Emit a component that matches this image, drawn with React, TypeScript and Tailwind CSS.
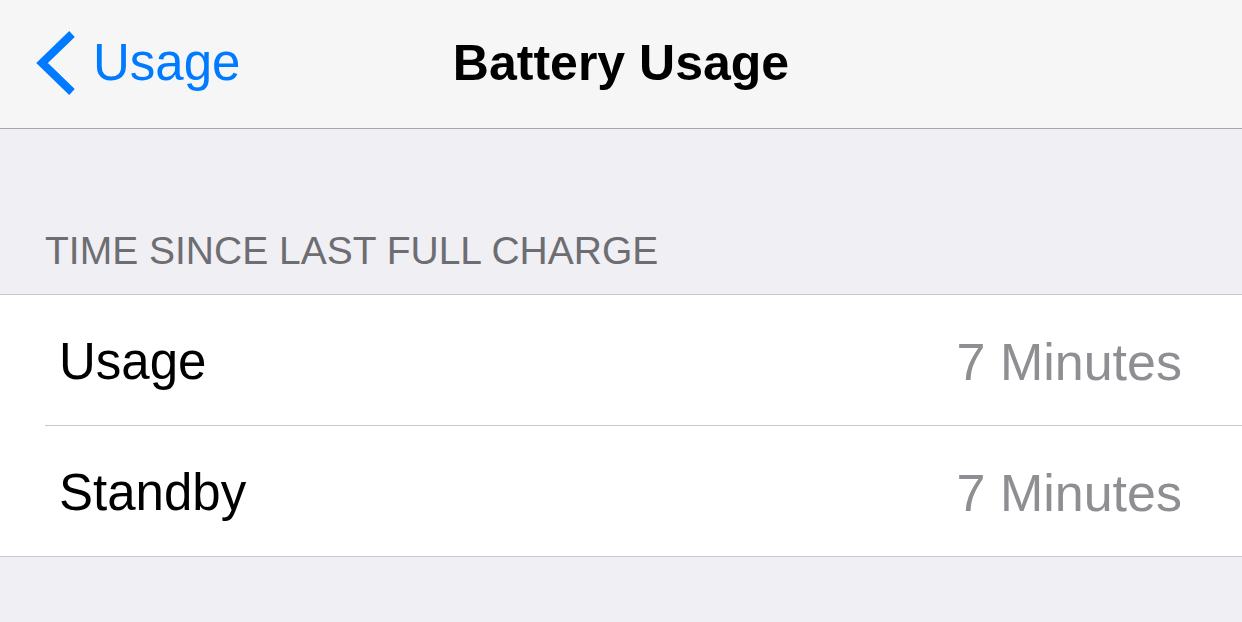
import React from "react";

const font = { fontFamily: '"Liberation Sans", Arial, sans-serif' };

function BackChevron() {
  return (
    <svg width="40" height="64" viewBox="0 0 40 64" className="shrink-0">
      <polyline
        points="36,3 6,32 36,61"
        fill="none"
        stroke="#007aff"
        strokeWidth="8"
        strokeLinejoin="miter"
        strokeLinecap="butt"
      />
    </svg>
  );
}

function Row({ label, value }: { label: string; value: string }) {
  return (
    <div className="flex h-[130px] items-center justify-between pl-[59px] pr-[60px] pt-[3px]">
      <span className="text-[51px] leading-none text-black">{label}</span>
      <span className="text-[52px] leading-none text-[#8e8e93]">{value}</span>
    </div>
  );
}

export default function App() {
  return (
    <div className="min-h-[622px] w-full bg-[#efeff4]" style={font}>
      {/* navigation bar */}
      <div className="grid h-[129px] grid-cols-[1fr_auto_1fr] items-center border-b border-[#a7a7aa] bg-[#f6f6f7] pb-[3px]">
        <div className="flex items-center gap-[17px] pl-[36px]">
          <BackChevron />
          <span className="text-[51px] leading-none text-[#007aff]">Usage</span>
        </div>
        <div className="text-[50px] font-bold leading-none text-black">Battery Usage</div>
        <div />
      </div>

      {/* section header */}
      <div className="flex h-[165px] items-end pb-[24px] pl-[45px]">
        <span className="text-[39px] leading-none text-[#6d6d72]">TIME SINCE LAST FULL CHARGE</span>
      </div>

      {/* grouped table */}
      <div className="border-y border-[#c8c7cc] bg-white">
        <Row label="Usage" value="7 Minutes" />
        <div className="ml-[45px] h-px bg-[#c8c7cc]" />
        <Row label="Standby" value="7 Minutes" />
      </div>
    </div>
  );
}
